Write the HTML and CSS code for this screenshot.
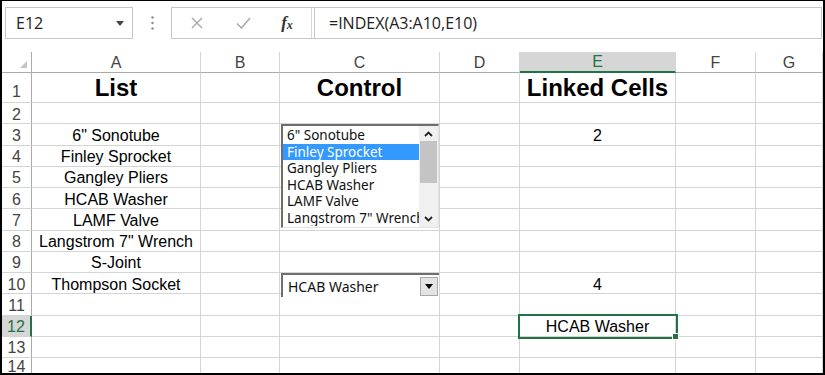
FILE: index.html
```html
<!DOCTYPE html>
<html lang="en">
<head>
    <meta charset="UTF-8">
    <title>Form Controls - Linked Cells</title>
    <link rel="stylesheet" href="styles.css">
</head>
<body>
    <div class="window">
        <!-- name box + formula bar -->
        <div class="formula-bar">
            <div class="name-box">
                <span>E12</span>
                <svg class="caret" width="8" height="5" viewBox="0 0 8 5"><polygon points="0,0 8,0 4,5" fill="#444"/></svg>
            </div>
            <div class="dots">
                <svg width="3" height="14" viewBox="0 0 3 14"><circle cx="1.5" cy="1.5" r="1.2" fill="#8a8a8a"/><circle cx="1.5" cy="7" r="1.2" fill="#8a8a8a"/><circle cx="1.5" cy="12.5" r="1.2" fill="#8a8a8a"/></svg>
            </div>
            <div class="formula-box">
                <div class="fx-buttons">
                    <div class="btn btn-cancel">
                        <svg width="12" height="12" viewBox="0 0 12 12"><path d="M1 1 L11 11 M11 1 L1 11" stroke="#a8a8a8" stroke-width="1.4" fill="none"/></svg>
                    </div>
                    <div class="btn btn-enter">
                        <svg width="15" height="12" viewBox="0 0 15 12"><path d="M1 6.5 L5.5 11 L14 1" stroke="#a8a8a8" stroke-width="1.5" fill="none"/></svg>
                    </div>
                    <div class="btn btn-fx"><span class="fx-f">f</span><span class="fx-x">x</span></div>
                </div>
                <div class="formula-input">=INDEX(A3:A10,E10)</div>
            </div>
        </div>

        <!-- worksheet -->
        <div class="sheet">
            <div class="grid">
                <div class="corner"><svg width="7" height="7" viewBox="0 0 7 7"><polygon points="7,0 7,7 0,7" fill="#c4c4c4"/></svg></div>
                <div class="col-hdr">A</div>
                <div class="col-hdr">B</div>
                <div class="col-hdr">C</div>
                <div class="col-hdr">D</div>
                <div class="col-hdr active">E</div>
                <div class="col-hdr">F</div>
                <div class="col-hdr">G</div>

                <div class="row-hdr">1</div>
                <div class="cell title">List</div><div class="cell"></div>
                <div class="cell title">Control</div><div class="cell"></div>
                <div class="cell title">Linked Cells</div><div class="cell"></div><div class="cell"></div>

                <div class="row-hdr">2</div>
                <div class="cell"></div><div class="cell"></div><div class="cell"></div><div class="cell"></div><div class="cell"></div><div class="cell"></div><div class="cell"></div>

                <div class="row-hdr">3</div>
                <div class="cell">6" Sonotube</div><div class="cell"></div><div class="cell"></div><div class="cell"></div>
                <div class="cell">2</div><div class="cell"></div><div class="cell"></div>

                <div class="row-hdr">4</div>
                <div class="cell">Finley Sprocket</div><div class="cell"></div><div class="cell"></div><div class="cell"></div><div class="cell"></div><div class="cell"></div><div class="cell"></div>

                <div class="row-hdr">5</div>
                <div class="cell">Gangley Pliers</div><div class="cell"></div><div class="cell"></div><div class="cell"></div><div class="cell"></div><div class="cell"></div><div class="cell"></div>

                <div class="row-hdr">6</div>
                <div class="cell">HCAB Washer</div><div class="cell"></div><div class="cell"></div><div class="cell"></div><div class="cell"></div><div class="cell"></div><div class="cell"></div>

                <div class="row-hdr">7</div>
                <div class="cell">LAMF Valve</div><div class="cell"></div><div class="cell"></div><div class="cell"></div><div class="cell"></div><div class="cell"></div><div class="cell"></div>

                <div class="row-hdr">8</div>
                <div class="cell">Langstrom 7" Wrench</div><div class="cell"></div><div class="cell"></div><div class="cell"></div><div class="cell"></div><div class="cell"></div><div class="cell"></div>

                <div class="row-hdr">9</div>
                <div class="cell">S-Joint</div><div class="cell"></div><div class="cell"></div><div class="cell"></div><div class="cell"></div><div class="cell"></div><div class="cell"></div>

                <div class="row-hdr">10</div>
                <div class="cell">Thompson Socket</div><div class="cell"></div><div class="cell"></div><div class="cell"></div>
                <div class="cell">4</div><div class="cell"></div><div class="cell"></div>

                <div class="row-hdr">11</div>
                <div class="cell"></div><div class="cell"></div><div class="cell"></div><div class="cell"></div><div class="cell"></div><div class="cell"></div><div class="cell"></div>

                <div class="row-hdr active">12</div>
                <div class="cell"></div><div class="cell"></div><div class="cell"></div><div class="cell"></div>
                <div class="cell selected">HCAB Washer</div><div class="cell"></div><div class="cell"></div>

                <div class="row-hdr">13</div>
                <div class="cell"></div><div class="cell"></div><div class="cell"></div><div class="cell"></div><div class="cell"></div><div class="cell"></div><div class="cell"></div>

                <div class="row-hdr">14</div>
                <div class="cell"></div><div class="cell"></div><div class="cell"></div><div class="cell"></div><div class="cell"></div><div class="cell"></div><div class="cell"></div>
            </div>

            <!-- list box form control -->
            <div class="listbox">
                <div class="list-items">
                    <div class="item">6" Sonotube</div>
                    <div class="item selected">Finley Sprocket</div>
                    <div class="item">Gangley Pliers</div>
                    <div class="item">HCAB Washer</div>
                    <div class="item">LAMF Valve</div>
                    <div class="item">Langstrom 7" Wrench</div>
                </div>
                <div class="scrollbar">
                    <svg class="arrow" width="9" height="6" viewBox="0 0 9 6"><path d="M1 5 L4.5 1.5 L8 5" stroke="#222" stroke-width="1.8" fill="none"/></svg>
                    <div class="thumb"></div>
                    <svg class="arrow" width="9" height="6" viewBox="0 0 9 6"><path d="M1 1 L4.5 4.5 L8 1" stroke="#222" stroke-width="1.8" fill="none"/></svg>
                </div>
            </div>

            <!-- combo box form control -->
            <div class="combo">
                <div class="combo-text">HCAB Washer</div>
                <div class="combo-btn">
                    <svg width="8" height="5" viewBox="0 0 8 5"><polygon points="0,0 8,0 4,5" fill="#000"/></svg>
                </div>
            </div>
        </div>
    </div>
</body>
</html>
```

FILE: styles.css
```css
body {
    margin: 0;
    background: #000;
    font-family: "Liberation Sans", Arial, sans-serif;
}
.window {
    width: 825px;
    height: 375px;
    box-sizing: border-box;
    border: 2px solid #000;
    border-top-width: 1px;
    background: #fff;
    display: flex;
    flex-direction: column;
    overflow: hidden;
}

/* ---------- formula bar ---------- */
.formula-bar {
    height: 51px;
    flex: none;
    box-sizing: border-box;
    padding: 6px 1px 0 3px;
    display: flex;
    align-items: flex-start;
}
.name-box {
    width: 128px;
    height: 32px;
    box-sizing: border-box;
    border: 1px solid #c6c6c6;
    display: flex;
    align-items: center;
    justify-content: space-between;
    padding: 0 8px 0 10px;
    font-family: "Open Sans", sans-serif;
    font-size: 16px;
    color: #222;
}
.dots {
    width: 38px;
    height: 32px;
    display: flex;
    align-items: center;
    justify-content: center;
}
.formula-box {
    flex: 1;
    height: 32px;
    box-sizing: border-box;
    border: 1px solid #c6c6c6;
    display: flex;
}
.fx-buttons {
    display: flex;
    width: 139px;
    border-right: 1px solid #d6d6d6;
}
.btn {
    display: flex;
    align-items: center;
    justify-content: center;
}
.btn-cancel { width: 50px; }
.btn-enter { width: 42px; }
.btn-fx {
    width: 46px;
    font-family: "Liberation Serif", serif;
    font-style: italic;
    font-weight: bold;
    color: #333;
}
.fx-f {
    font-size: 17px;
}
.fx-x {
    font-size: 12px;
    margin-top: 5px;
}
.formula-input {
    flex: 1;
    margin-left: 2px;
    border-left: 1px solid #c6c6c6;
    padding-left: 14px;
    display: flex;
    align-items: center;
    font-family: "Open Sans", sans-serif;
    font-size: 16px;
    color: #222;
}

/* ---------- worksheet grid ---------- */
.sheet {
    position: relative;
    flex: 1;
}
.grid {
    display: grid;
    grid-template-columns: 30px 169px 79px 160px 80px 156px 80px 67px;
    grid-template-rows: 21px 30px repeat(12, 21.25px) 16px;
}
.grid > div {
    box-sizing: border-box;
    display: flex;
    align-items: center;
    justify-content: center;
    white-space: nowrap;
}
.corner {
    background: #fff;
    border-right: 1px solid #ababab;
    border-bottom: 1px solid #ababab;
    align-items: flex-end !important;
    justify-content: flex-end !important;
    padding: 0 4px 4px 0;
}
.col-hdr {
    background: #fff;
    color: #444;
    font-size: 16px;
    padding-top: 1px;
    border-right: 1px solid #d4d4d4;
    border-bottom: 1px solid #ababab;
}
.col-hdr.active {
    background: #d6d6d6;
    color: #217346;
    border-bottom: 2px solid #217346;
}
.row-hdr {
    background: #fff;
    color: #444;
    font-size: 16px;
    padding-top: 3px;
    border-right: 1px solid #ababab;
    border-bottom: 1px solid #d4d4d4;
}
.grid > .row-hdr:nth-child(9) {
    padding-top: 8px;
}
.row-hdr.active {
    background: #d6d6d6;
    color: #217346;
    border-right: 2px solid #217346;
}
.cell {
    font-size: 16px;
    color: #000;
    padding-top: 3px;
    border-right: 1px solid #d4d4d4;
    border-bottom: 1px solid #d4d4d4;
}
.cell.title {
    font-size: 24px;
    font-weight: bold;
    padding-top: 1px;
}
.cell.selected {
    position: relative;
    outline: 2px solid #217346;
    z-index: 1;
}
.cell.selected::after {
    content: "";
    position: absolute;
    right: -4px;
    bottom: -4px;
    width: 5px;
    height: 5px;
    background: #217346;
    border: 1px solid #fff;
}

/* ---------- form controls ---------- */
.listbox {
    position: absolute;
    left: 279px;
    top: 72px;
    width: 158px;
    height: 104px;
    box-sizing: border-box;
    background: #fff;
    border-top: 2px solid #6e6e6e;
    border-left: 2px solid #6e6e6e;
    border-right: 1px solid #e3e3e3;
    border-bottom: 1px solid #e3e3e3;
    display: flex;
    font-family: "Noto Sans", sans-serif;
    font-size: 13.5px;
    color: #111;
}
.list-items {
    flex: 1;
    overflow: hidden;
    padding-top: 1px;
}
.item {
    height: 16.5px;
    line-height: 16.5px;
    padding-left: 4px;
    white-space: nowrap;
    overflow: hidden;
}
.item.selected {
    background: #3399ff;
    color: #fff;
}
.scrollbar {
    width: 19px;
    background: #f0f0f0;
    display: flex;
    flex-direction: column;
    align-items: center;
    justify-content: space-between;
    padding: 5px 0 5px;
    box-sizing: border-box;
}
.thumb {
    width: 17px;
    height: 42px;
    margin-top: -30px;
    background: #c4c4c4;
}
.combo {
    position: absolute;
    left: 279px;
    top: 221px;
    width: 158px;
    height: 24px;
    box-sizing: border-box;
    background: #fff;
    border-top: 2px solid #6e6e6e;
    border-left: 2px solid #6e6e6e;
    display: flex;
    align-items: center;
    font-family: "Noto Sans", sans-serif;
    font-size: 14px;
    color: #111;
}
.combo-text {
    flex: 1;
    padding-left: 5px;
}
.combo-btn {
    width: 18px;
    height: 19px;
    margin-right: 1px;
    box-sizing: border-box;
    background: #e3e3e3;
    border: 1px solid #a8a8a8;
    display: flex;
    align-items: center;
    justify-content: center;
}
```
